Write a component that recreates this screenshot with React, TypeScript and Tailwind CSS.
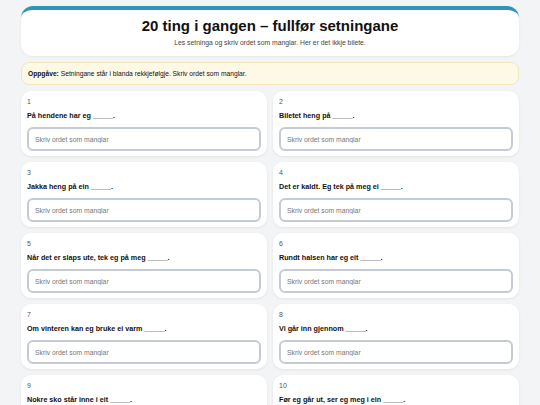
const items = [
  "På hendene har eg _____.",
  "Biletet heng på _____.",
  "Jakka heng på ein _____.",
  "Det er kaldt. Eg tek på meg ei _____.",
  "Når det er slaps ute, tek eg på meg _____.",
  "Rundt halsen har eg eit _____.",
  "Om vinteren kan eg bruke ei varm _____.",
  "Vi går inn gjennom _____.",
  "Nokre sko står inne i eit _____.",
  "Før eg går ut, ser eg meg i ein _____.",
];

export default function App() {
  return (
    <div
      className="h-[405px] overflow-hidden bg-[#f3f4f6] px-[21px] pt-[6px] text-[#111]"
      style={{ fontFamily: '"Liberation Sans", Arial, sans-serif' }}
    >
      <header className="rounded-[12px] border-t-4 border-[#2f94b7] bg-white pt-[7px] pb-[9px] text-center shadow-[0_1px_3px_rgba(0,0,0,0.06)]">
        <h1 className="text-[15px] font-bold leading-[18px]">
          20 ting i gangen – fullfør setningane
        </h1>
        <p className="mt-[4px] text-[6.8px] leading-[8px] text-[#444]">
          Les setninga og skriv ordet som manglar. Her er det ikkje bilete.
        </p>
      </header>

      <div className="mt-[6px] rounded-[8px] border border-[#f2e6b8] bg-[#fdf9e6] px-[6px] py-[6.5px] text-[6.7px] leading-[8px]">
        <b>Oppgåve:</b> Setningane står i blanda rekkjefølgje. Skriv ordet som manglar.
      </div>

      <div className="mt-[6px] grid grid-cols-2 gap-[6px]">
        {items.map((s, i) => (
          <div
            key={i}
            className="rounded-[10px] bg-white px-[6px] pt-[7px] pb-[5px] shadow-[0_1px_3px_rgba(0,0,0,0.07)]"
          >
            <div className="text-[7px] leading-[8px] text-[#555]">{i + 1}</div>
            <div className="mt-[6px] text-[7.2px] font-bold leading-[8px]">{s}</div>
            <input
              placeholder="Skriv ordet som manglar"
              className="mt-[7px] block h-[24px] w-full rounded-[6px] border-2 border-[#c5cbd4] bg-white px-[6px] text-[6.8px] text-[#111] placeholder:text-[#777] outline-none"
              style={{ fontFamily: '"Liberation Sans", Arial, sans-serif' }}
            />
          </div>
        ))}
      </div>
    </div>
  );
}
